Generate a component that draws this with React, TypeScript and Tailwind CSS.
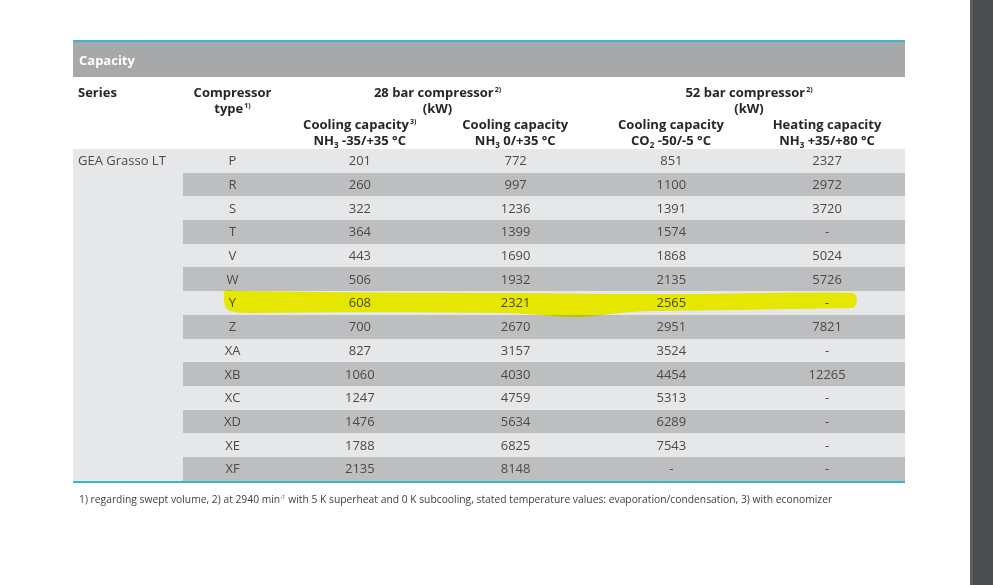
import React from "react";

type Row = { type: string; values: string[] };

const rows: Row[] = [
  { type: "P", values: ["201", "772", "851", "2327"] },
  { type: "R", values: ["260", "997", "1100", "2972"] },
  { type: "S", values: ["322", "1236", "1391", "3720"] },
  { type: "T", values: ["364", "1399", "1574", "-"] },
  { type: "V", values: ["443", "1690", "1868", "5024"] },
  { type: "W", values: ["506", "1932", "2135", "5726"] },
  { type: "Y", values: ["608", "2321", "2565", "-"] },
  { type: "Z", values: ["700", "2670", "2951", "7821"] },
  { type: "XA", values: ["827", "3157", "3524", "-"] },
  { type: "XB", values: ["1060", "4030", "4454", "12265"] },
  { type: "XC", values: ["1247", "4759", "5313", "-"] },
  { type: "XD", values: ["1476", "5634", "6289", "-"] },
  { type: "XE", values: ["1788", "6825", "7543", "-"] },
  { type: "XF", values: ["2135", "8148", "-", "-"] },
];

function Sup({ children }: { children: React.ReactNode }) {
  return <span className="text-[7px] leading-none font-bold relative -top-[5px] ml-[1px]">{children}</span>;
}

function Sub({ children }: { children: React.ReactNode }) {
  return <span className="text-[8px] leading-none font-bold relative top-[3px]">{children}</span>;
}

function Highlighter() {
  // yellow marker stroke drawn over the Y row
  return (
    <svg className="absolute inset-0 pointer-events-none mix-blend-darken" width="993" height="585">
      <path
        d="M224 292 C226 289 230 290 236 291 C320 292 420 293 520 293 C580 294 640 294 700 294 C760 293 820 292 853 293 C858 295 858 305 853 308 C800 309 720 310 650 311 C620 312 600 316 578 317 C556 317 535 314 505 313 C420 312 330 312 250 313 C236 313 229 312 226 308 C224 303 223 296 224 292 Z"
        fill="#e8ec00"
      />
    </svg>
  );
}

export default function App() {
  return (
    <div
      className="relative flex w-[993px] h-[585px] bg-white text-[13px] leading-[16px]"
      style={{ fontFamily: '"Open Sans", "Noto Sans", sans-serif' }}
    >
      <div className="flex-1 pl-[73px] pt-[40px]">
        <div className="w-[832px]">
          <div className="h-[2px] bg-[#3fb4c6]" />
          {/* Title bar */}
          <div className="h-[35px] bg-[#a7a8aa] flex items-center pl-[6px] text-white font-bold">
            Capacity
          </div>

          {/* Header */}
          <div className="h-[72px] flex pt-[7px] text-[#262626] font-bold">
            <div className="w-[110px] pl-[5px]">Series</div>
            <div className="w-[99px] text-center">
              Compressor
              <br />
              type<Sup>1)</Sup>
            </div>
            <div className="w-[311px] flex flex-col items-center">
              <div className="text-center">
                28 bar compressor<Sup>2)</Sup>
                <br />
                (kW)
              </div>
              <div className="flex w-full">
                <div className="w-1/2 text-center">
                  Cooling capacity<Sup>3)</Sup>
                  <br />
                  NH<Sub>3</Sub> -35/+35 °C
                </div>
                <div className="w-1/2 text-center">
                  Cooling capacity
                  <br />
                  NH<Sub>3</Sub> 0/+35 °C
                </div>
              </div>
            </div>
            <div className="w-[312px] flex flex-col items-center">
              <div className="text-center">
                52 bar compressor<Sup>2)</Sup>
                <br />
                (kW)
              </div>
              <div className="flex w-full">
                <div className="w-1/2 text-center">
                  Cooling capacity
                  <br />
                  CO<Sub>2</Sub> -50/-5 °C
                </div>
                <div className="w-1/2 text-center">
                  Heating capacity
                  <br />
                  NH<Sub>3</Sub> +35/+80 °C
                </div>
              </div>
            </div>
          </div>

          {/* Body */}
          <div className="flex bg-[#e6e7e8] text-[#4a4a4a]">
            <div className="w-[110px] pl-[5px] pt-[3px]">GEA Grasso LT</div>
            <div className="flex-1 flex flex-col">
              {rows.map((row, i) => (
                <div
                  key={row.type}
                  className={`h-[23.7px] flex items-center pb-[1px] ${i % 2 === 1 ? "bg-[#bdbec0]" : "bg-[#e6e7e8]"}`}
                >
                  <div className="w-[99px] text-center">{row.type}</div>
                  {row.values.map((v, j) => (
                    <div key={j} className="w-[155.75px] text-center">
                      {v}
                    </div>
                  ))}
                </div>
              ))}
            </div>
          </div>
          <div className="h-[2px] bg-[#3fb4c6]" />
        </div>

        <p className="mt-[8px] pl-[6px] text-[10.3px] text-[#404040]">
          1) regarding swept volume, 2) at 2940 min
          <span className="text-[6px] leading-none relative -top-[4px]">-1</span> with 5 K superheat and 0 K
          subcooling, stated temperature values: evaporation/condensation, 3) with economizer
        </p>
      </div>

      <div className="w-[23px] bg-[#4b4d50] border-l-[3px] border-[#5a5c5f]" />

      <Highlighter />
    </div>
  );
}
